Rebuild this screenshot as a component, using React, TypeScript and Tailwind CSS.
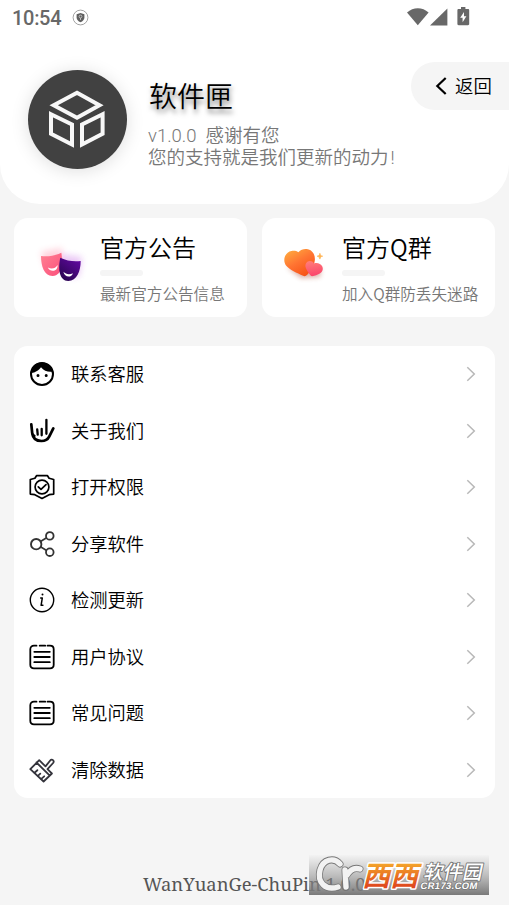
import React from 'react';

const sans = "font-['Roboto','Noto_Sans_CJK_SC',sans-serif]";

function ShieldBadge() {
  return (
    <svg width="17" height="17" viewBox="0 0 17 17" fill="none">
      <circle cx="8.5" cy="8.5" r="7.4" stroke="#8a8a8a" strokeWidth="0.8" />
      <path d="M8.5 4 12.4 5.2v3.2c0 2.2-1.6 3.8-3.9 4.8-2.3-1-3.9-2.6-3.9-4.8V5.2z" fill="#5f5f5f" />
      <circle cx="8.5" cy="7.5" r="1.4" stroke="#ddd" strokeWidth="0.7" />
      <path d="M8.5 9v2" stroke="#ddd" strokeWidth="0.7" />
    </svg>
  );
}

function StatusBar() {
  return (
    <div className="flex h-[34px] items-center pl-3 pr-[39px] text-[#686868]">
      <span className="text-[20px] leading-[34px] font-medium w-[60px] tracking-[-0.3px] pt-px">10:54</span>
      <ShieldBadge />
      <div className="ml-auto flex items-start">
        <svg width="22" height="18" viewBox="0 0 22 18" fill="currentColor">
          <path d="M0 4.6C6.2-1.1 15.4-1.1 21.6 4.6L10.8 17.2z" />
        </svg>
        <svg className="ml-[1px]" width="18" height="18" viewBox="0 0 18 18" fill="currentColor">
          <path d="M0 17.6 17.4.4v17.2z" />
        </svg>
        <svg className="ml-[9px] -mt-px" width="13" height="19" viewBox="0 0 13 19" fill="currentColor">
          <path d="M4 0h4.4v2H11c.7 0 1.2.5 1.2 1.2v13.9c0 .7-.5 1.2-1.2 1.2H1.6c-.7 0-1.2-.5-1.2-1.2V3.2C.4 2.5.9 2 1.6 2H4z" />
          <path d="M7 5 3.2 10.8h2.4v4.4l3.8-6H7z" fill="#fff" />
        </svg>
      </div>
    </div>
  );
}

function BoxLogo() {
  return (
    <div className="h-[99px] w-[99px] shrink-0 rounded-full bg-[#414141] shadow-[0_2px_18px_rgba(0,0,0,0.13)]">
      <svg width="99" height="99" viewBox="0 0 99 99" fill="none" stroke="#f7f7f7" strokeWidth="4">
        <path d="M49 22.8 71.5 35.3 49 47.8 25.7 35.3z" />
        <path d="M23 44.2 44 54.5v20L23 63.8z" />
        <path d="M74.6 44.2 54 54.5v20l20.6-10.7z" />
      </svg>
    </div>
  );
}

function Header() {
  return (
    <header className="h-[204px] rounded-b-[40px] bg-white">
      <StatusBar />
      <div className="flex pl-[28px]">
        <div className="pt-9">
          <BoxLogo />
        </div>
        <div className="ml-[22px] w-[262px] shrink-0 pt-11">
          <h1 className="text-[28px] leading-[40px] font-[350] text-black [text-shadow:1px_4px_5px_rgba(0,0,0,0.5)]">软件匣</h1>
          <div className="mt-[7px] -ml-px text-[18.5px] leading-[22px] font-[350] whitespace-pre text-[#777]">
            <p>v1.0.0  感谢有您</p>
            <p>您的支持就是我们更新的动力<span className="ml-0.5">!</span></p>
          </div>
        </div>
        <button className="mt-7 flex h-12 w-[98px] shrink-0 items-center rounded-l-full bg-[#f5f5f5] pl-6">
          <svg width="12" height="18" viewBox="0 0 12 18" fill="none" stroke="#000" strokeWidth="2.2">
            <path d="M10.7 1 2.3 9l8.4 8" />
          </svg>
          <span className="ml-2 pt-0.5 text-[18.4px] whitespace-nowrap font-[350]">返回</span>
        </button>
      </div>
    </header>
  );
}

function MasksIcon() {
  return (
    <svg width="64" height="64" viewBox="0 0 64 64">
      <defs>
        <linearGradient id="pink" x1="0" y1="0" x2="1" y2="1">
          <stop offset="0" stopColor="#ff8292" />
          <stop offset="1" stopColor="#fb4f7c" />
        </linearGradient>
        <linearGradient id="purple" x1="1" y1="0" x2="0.3" y2="1">
          <stop offset="0" stopColor="#6709a9" />
          <stop offset="1" stopColor="#2b0553" />
        </linearGradient>
        <filter id="maskGlow" x="-50%" y="-50%" width="200%" height="200%">
          <feGaussianBlur stdDeviation="3" />
        </filter>
      </defs>
      <g filter="url(#maskGlow)" opacity="0.28">
        <path d="M12 17 33 13v20H16z" fill="#ff6384" />
        <path d="M31 19l22 3-3 20H35z" fill="#b53cdd" />
      </g>
      <path d="M12 21c7 .9 13.500-.1 20.300-3.300.8 4 .9 9.500.2 13.500-.8 5.500-3.800 9.600-8.800 9.800C15.200 41.200 12 31 12 21z" fill="url(#pink)" />
      <path d="M18.800 32.600c4 1.800 7.700.9 9.800-2.700.5 6.800-7.400 7.900-9.800 2.700z" fill="#fff" />
      <path d="M31.300 22.700c6.200 3.200 13.200 4 20.400 3.300 0 10-3.900 20-12.400 20-9-.3-10.500-12-8-23.300z" fill="url(#purple)" />
      <path d="M34.400 36.800c2.600 2.800 6.300 3.200 9.500 1.400-1.200 5-8.600 4.400-9.500-1.400z" fill="#fff" />
    </svg>
  );
}

function HeartsIcon() {
  return (
    <svg className="-ml-[3.5px]" width="64" height="64" viewBox="0 0 64 64">
      <defs>
        <linearGradient id="orange" x1="0.1" y1="0" x2="0.75" y2="1">
          <stop offset="0" stopColor="#ffae40" />
          <stop offset="0.5" stopColor="#ff7432" />
          <stop offset="1" stopColor="#f64f14" />
        </linearGradient>
        <linearGradient id="rose" x1="0.4" y1="0" x2="0.6" y2="1">
          <stop offset="0" stopColor="#ff7c79" />
          <stop offset="1" stopColor="#fb426b" />
        </linearGradient>
        <filter id="heartGlow" x="-50%" y="-50%" width="200%" height="200%">
          <feGaussianBlur stdDeviation="2.5" />
        </filter>
      </defs>
      <path d="M13 32 27 43l19-1 1-8z" fill="#a5361c" opacity="0.4" filter="url(#heartGlow)" />
      <path d="M24.300 17.200C26.800 14.500 29.500 13.800 32.500 14c5.600.3 9 5.600 8.300 11.500-.6 5.500-4 10.500-7.800 14.500-1.200 1.200-2.300 1.500-3.900.7C23 37.900 15.500 35 12 30.500 8 24.500 11.500 17 17.500 16c2.600-.4 5-.1 6.800 1.200z" fill="url(#orange)" />
      <path d="M39.800 28.400c3.300-1.200 7 0 8.500 3 1.500 3.500-.5 6-3.500 7.600-1.800.9-3.600 1.500-5.600 2.100-1.200.3-2 .1-2.800-.9-1.700-2.100-3.700-4.700-4.600-7.400-1.200-3.700 1-6.700 4-6.800 1.900 0 3.300.8 4 2.400z" fill="url(#rose)" />
      <path d="M45.900 18.300c.4 1.900 1 2.500 2.800 2.900-1.800.4-2.400 1-2.800 2.900-.4-1.900-1-2.500-2.800-2.900 1.800-.4 2.400-1 2.800-2.900z" fill="#ffb455" stroke="#ffb455" strokeWidth="0.7" />
    </svg>
  );
}

interface NoticeCardProps {
  icon: React.ReactNode;
  title: string;
  subtitle: string;
}

function NoticeCard({ icon, title, subtitle }: NoticeCardProps) {
  return (
    <div className="flex h-[99px] flex-1 rounded-[14px] bg-white font-['Noto_Sans_CJK_SC',sans-serif]">
      <div className="w-[86px] shrink-0 pl-[15px] pt-[17px]">{icon}</div>
      <div className="pt-3 whitespace-nowrap">
        <h2 className="text-[24px] leading-[34px] font-[350] text-black">{title}</h2>
        <div className="mt-[6px] h-[6px] w-[43px] rounded-full bg-[#f5f5f5]" />
        <p className="mt-[6px] text-[15.6px] leading-[22px] font-[350] text-[#777]">{subtitle}</p>
      </div>
    </div>
  );
}

const faceIcon = (
  <>
    <circle cx="13" cy="13" r="11" strokeWidth="2" />
    <path d="M2 12C3 4 7.5 1.4 13 1.4c6 0 10 4 11 9.2-4.8.8-9-.6-12-4.4C10.2 9.2 6.300 11.600 2 12z" fill="#000" stroke="none" />
    <path d="M9 14.5v.01M17.2 14.5v.01" strokeWidth="3" />
  </>
);

const handIcon = (
  <>
    <path d="M2.3 6.3 3.2 15c.6 5.200 4.200 8 9.300 8 3.800 0 6.300-1.600 7.700-4.400l4.100-8.200" strokeWidth="2.7" />
    <path d="M17.4 1.800v14M8.200 11.300l.5 5.400M12.700 10.800v6.500M3.600 16.500l1.900 1.400" strokeWidth="2.3" />
  </>
);

const permissionIcon = (
  <>
    <path d="M7.5 1.700h11l1.600 2.600 4.600 1.200v14.600l-4.500.6L13 24.500l-7.200-3.800-4.500-.6V5.500l4.600-1.200z" strokeWidth="1.7" />
    <circle cx="13" cy="13" r="6.9" strokeWidth="1.7" />
    <path d="m9.300 12.800 2.700 2.600 5-4.700" strokeWidth="1.7" />
  </>
);

const shareIcon = (
  <g stroke="#333">
    <circle cx="7.2" cy="13.2" r="5.2" strokeWidth="1.9" />
    <circle cx="20.8" cy="4.9" r="3.8" strokeWidth="1.8" />
    <circle cx="20.8" cy="21.2" r="3.8" strokeWidth="1.8" />
    <path d="m11.900 10.300 5.300-3.300M11.900 16l5.300 3.300" strokeWidth="1.6" />
  </g>
);

const infoIcon = (
  <>
    <circle cx="13" cy="13" r="11.7" strokeWidth="1.4" />
    <path d="M13.5 7.500v.01" strokeWidth="2" />
    <path d="M11.700 11h1.600l-1.200 7.300h1.800" strokeWidth="1.5" />
  </>
);

const documentIcon = (
  <>
    <path d="M7.500 1.700H5c-2.200 0-3.700 1.300-3.700 3.500v15.600c0 2.300 1.400 3.500 3.700 3.500h16c2.300 0 3.700-1.200 3.700-3.500V5.200c0-2.200-1.500-3.500-3.700-3.500h-2.500M10.700 1.700h5.500" strokeWidth="1.8" />
    <path d="M5.300 7.800h15.500M5.300 13h15.500M5.300 18.200h15.500" strokeWidth="1.8" />
  </>
);

const brushIcon = (
  <g stroke="#34343c" strokeWidth="1.8">
    <path d="m10.200 3.200 6.300 6.200 4.700-5.900c1.800-2.200 4.600.2 2.900 2.500l-5.600 6.200 4.400 4.300-8.300 8L1.300 12.200zM7.500 5.500 20.300 18.200" />
    <path d="m5.500 15.700 2.900-2.500M8.900 18.900l2.400-2.200M12.300 21.900l2.900-2.600" />
  </g>
);

const menu = [
  { label: '联系客服', icon: faceIcon },
  { label: '关于我们', icon: handIcon },
  { label: '打开权限', icon: permissionIcon },
  { label: '分享软件', icon: shareIcon },
  { label: '检测更新', icon: infoIcon },
  { label: '用户协议', icon: documentIcon },
  { label: '常见问题', icon: documentIcon },
  { label: '清除数据', icon: brushIcon },
];

function MenuRow({ label, icon }: { label: string; icon: React.ReactNode }) {
  return (
    <div className="flex h-[56.5px] items-center pl-[15px] pr-[19px]">
      <svg width="26" height="26" viewBox="0 0 26 26" fill="none" stroke="#000" strokeLinecap="round" strokeLinejoin="round">
        {icon}
      </svg>
      <span className="ml-4 pt-px text-[18.3px] font-[350] text-black">{label}</span>
      <svg className="ml-auto" width="10" height="16" viewBox="0 0 10 16" fill="none" stroke="#b8b8b8" strokeWidth="1.5">
        <path d="m1.3 1.2 7 6.800-7 6.800" />
      </svg>
    </div>
  );
}

function SiteBadge() {
  return (
    <svg className="absolute left-[309px] top-[14px] overflow-visible" width="180" height="41" viewBox="0 0 180 41">
      <defs>
        <linearGradient id="badgeBg" x1="0" y1="0" x2="0" y2="1">
          <stop offset="0" stopColor="#888" stopOpacity="0.02" />
          <stop offset="0.5" stopColor="#888" stopOpacity="0.5" />
          <stop offset="1" stopColor="#777" stopOpacity="0.98" />
        </linearGradient>
        <linearGradient id="badgeText" x1="0" y1="0" x2="0" y2="1">
          <stop offset="0.2" stopColor="#f6ad2c" />
          <stop offset="0.8" stopColor="#df4a1e" />
        </linearGradient>
      </defs>
      <rect width="180" height="40" fill="url(#badgeBg)" />
      <g fill="none" strokeLinecap="round" strokeLinejoin="round">
        <path d="M31 9C25 2 14 4 11 15c-3 12 5 21 18 17M36 15l1 17M38 20c3-5 7-8 13-6" stroke="#777" strokeWidth="7" />
        <path d="M31 9C25 2 14 4 11 15c-3 12 5 21 18 17M36 15l1 17M38 20c3-5 7-8 13-6" stroke="#f2f2f2" strokeWidth="5.4" />
      </g>
      <g className="font-['Noto_Sans_CJK_SC',sans-serif]" strokeLinejoin="round" paintOrder="stroke">
        <text transform="translate(53 31) skewX(-14)" fontSize="28" fontWeight="700" fill="url(#badgeText)" stroke="#fff" strokeWidth="3">西西</text>
        <text transform="translate(114 24) skewX(-12)" fontSize="19.5" fontWeight="500" fill="#fff" stroke="#777" strokeWidth="1.8">软件园</text>
      </g>
      <text transform="translate(111 34) skewX(-10)" className="font-['Liberation_Sans',sans-serif]" fontSize="9.5" fontWeight="700" textLength="57" fill="#fff" stroke="#777" strokeWidth="1.5" paintOrder="stroke">CR173.COM</text>
    </svg>
  );
}

export default function App() {
  return (
    <div className={`${sans} flex h-[905px] w-[509px] flex-col overflow-hidden bg-[#f5f5f5] text-black`}>
      <Header />
      <main className="px-[14px] pt-[14px]">
        <div className="flex gap-[15px]">
          <NoticeCard icon={<MasksIcon />} title="官方公告" subtitle="最新官方公告信息" />
          <div className="flex flex-1 [&_h2]:-ml-[6px] [&_p]:-ml-[6px] [&_h2+div]:-ml-[6px]">
            <NoticeCard icon={<HeartsIcon />} title="官方Q群" subtitle="加入Q群防丢失迷路" />
          </div>
        </div>
        <div className="mt-[29px] rounded-[14px] bg-white">
          {menu.map((item) => (
            <MenuRow key={item.label} {...item} />
          ))}
        </div>
      </main>
      <footer className="relative mt-auto h-[64px] pl-[143px] pt-[30px]">
        <p className="font-['Noto_Serif','DejaVu_Serif_Condensed','DejaVu_Serif',serif] text-[18.4px] leading-[26px] whitespace-nowrap text-[#555]">
          WanYuanGe-ChuPin 1.0.0
        </p>
        <SiteBadge />
      </footer>
    </div>
  );
}
